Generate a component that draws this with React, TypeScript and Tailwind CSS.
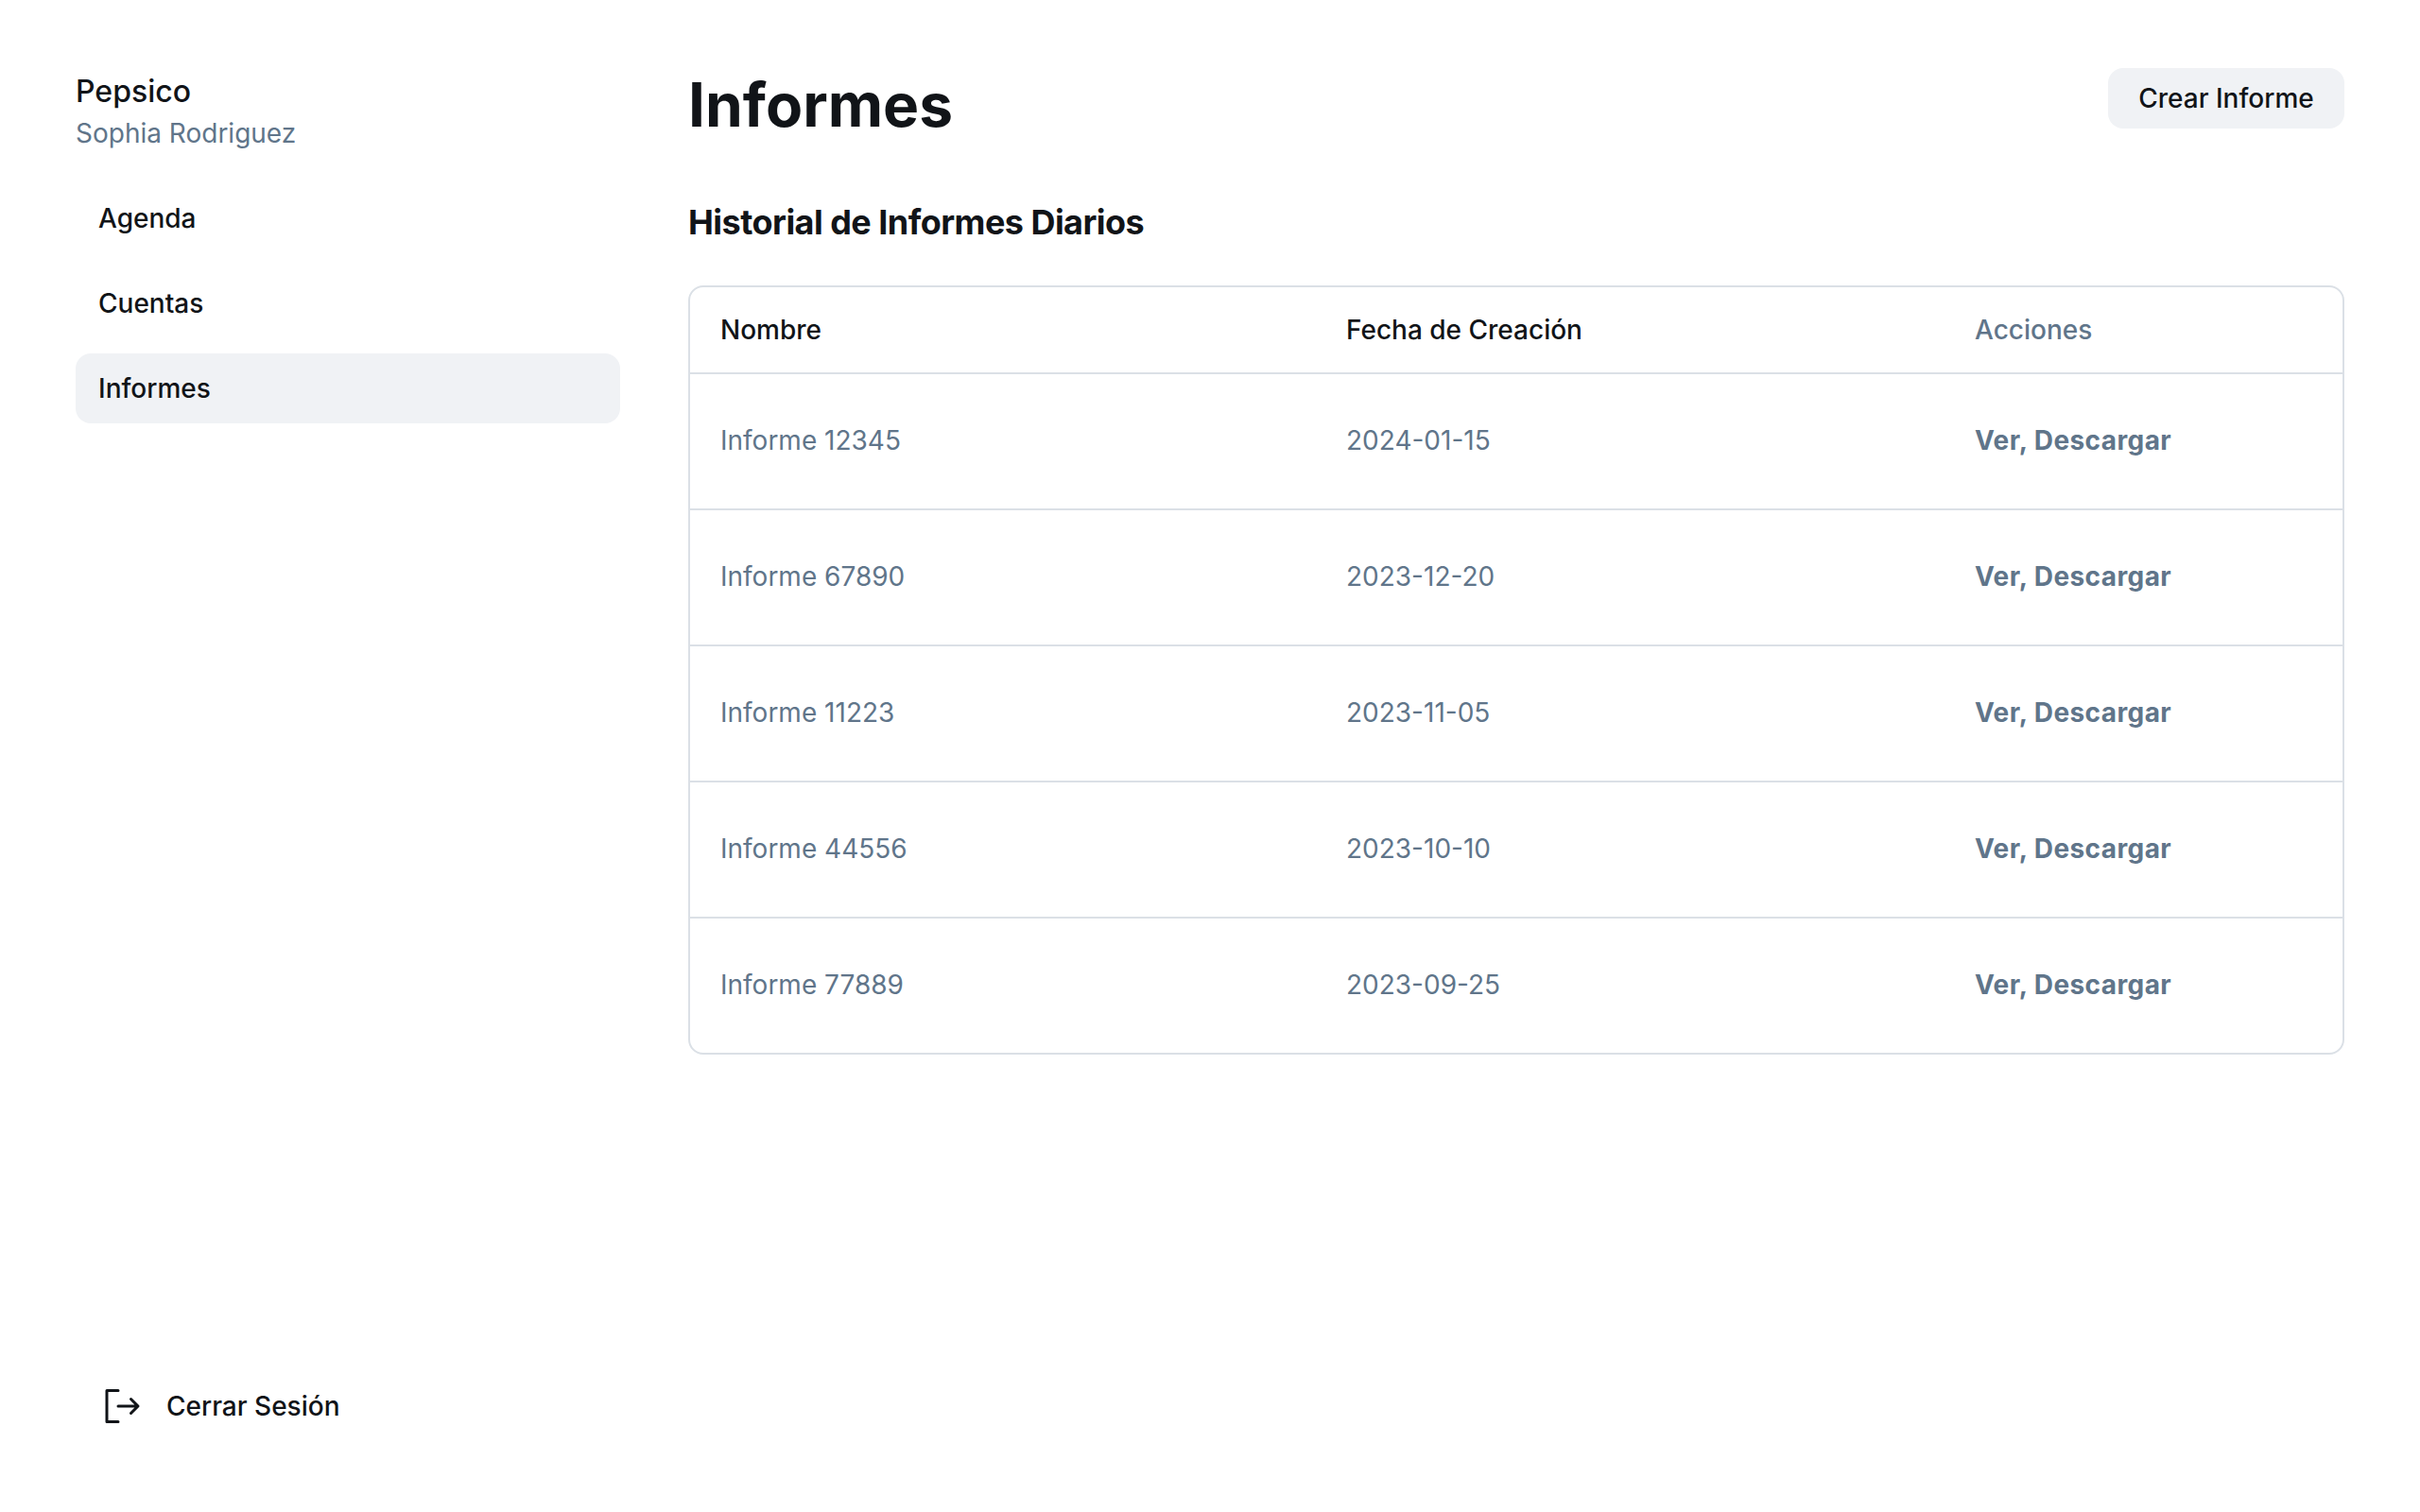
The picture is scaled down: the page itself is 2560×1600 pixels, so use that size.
import * as React from "react"
import { PiSignOut } from "react-icons/pi"

const reports = [
  { name: "Informe 12345", date: "2024-01-15" },
  { name: "Informe 67890", date: "2023-12-20" },
  { name: "Informe 11223", date: "2023-11-05" },
  { name: "Informe 44556", date: "2023-10-10" },
  { name: "Informe 77889", date: "2023-09-25" },
]

const navItems = ["Agenda", "Cuentas", "Informes"]

export default function App() {
  return (
    <div className="flex h-[1600px] gap-[72px] bg-white px-[80px] pt-[72px] pb-[75px] font-['Inter',sans-serif] text-[#111418]">
      <aside className="flex w-[576px] flex-col justify-between">
        <div className="flex flex-col gap-[32px]">
          <div className="flex flex-col">
            <h2 className="pt-[2px] text-[32px] leading-[46px] font-medium">Pepsico</h2>
            <p className="text-[28px] leading-[42px] text-[#60758a]">Sophia Rodriguez</p>
          </div>
          <nav className="flex flex-col gap-4">
            {navItems.map((item) => (
              <a
                key={item}
                className={`rounded-2xl px-6 py-4 text-[28px] leading-[42px] font-medium ${item === "Informes" ? "bg-[#f0f2f5]" : ""}`}
              >
                {item}
              </a>
            ))}
          </nav>
        </div>
        <a className="flex items-center gap-6 px-6 py-[13px] text-[28px] leading-[42px] font-medium">
          <PiSignOut className="h-12 w-12" />
          Cerrar Sesión
        </a>
      </aside>

      <main className="flex flex-1 flex-col">
        <header className="flex items-start justify-between">
          <h1 className="text-[64px] leading-[78px] font-bold">Informes</h1>
          <button className="h-16 w-[250px] rounded-2xl bg-[#f0f2f5] text-[28px] leading-[42px] font-medium">
            Crear Informe
          </button>
        </header>

        <h3 className="mt-[62px] text-[36px] leading-[46px] font-bold tracking-[-0.54px]">Historial de Informes Diarios</h3>

        <div className="mt-[44px] overflow-hidden rounded-2xl border-2 border-[#dbe0e6]">
          <table className="w-full table-fixed border-collapse text-left text-[28px] leading-[42px]">
            <colgroup>
              <col className="w-[662px]" />
              <col className="w-[665px]" />
              <col />
            </colgroup>
            <thead>
              <tr>
                <th className="px-8 py-6 font-medium">Nombre</th>
                <th className="px-8 py-6 font-medium">Fecha de Creación</th>
                <th className="px-8 py-6 font-medium text-[#60758a]">Acciones</th>
              </tr>
            </thead>
            <tbody>
              {reports.map((report) => (
                <tr key={report.name} className="h-[144px] border-t-2 border-[#dbe0e6] text-[#60758a] last:h-[143px]">
                  <td className="px-8 pb-[2px]">{report.name}</td>
                  <td className="px-8 pb-[2px]">{report.date}</td>
                  <td className="px-8 pb-[2px] font-bold tracking-[0.42px]">Ver, Descargar</td>
                </tr>
              ))}
            </tbody>
          </table>
        </div>
      </main>
    </div>
  )
}
